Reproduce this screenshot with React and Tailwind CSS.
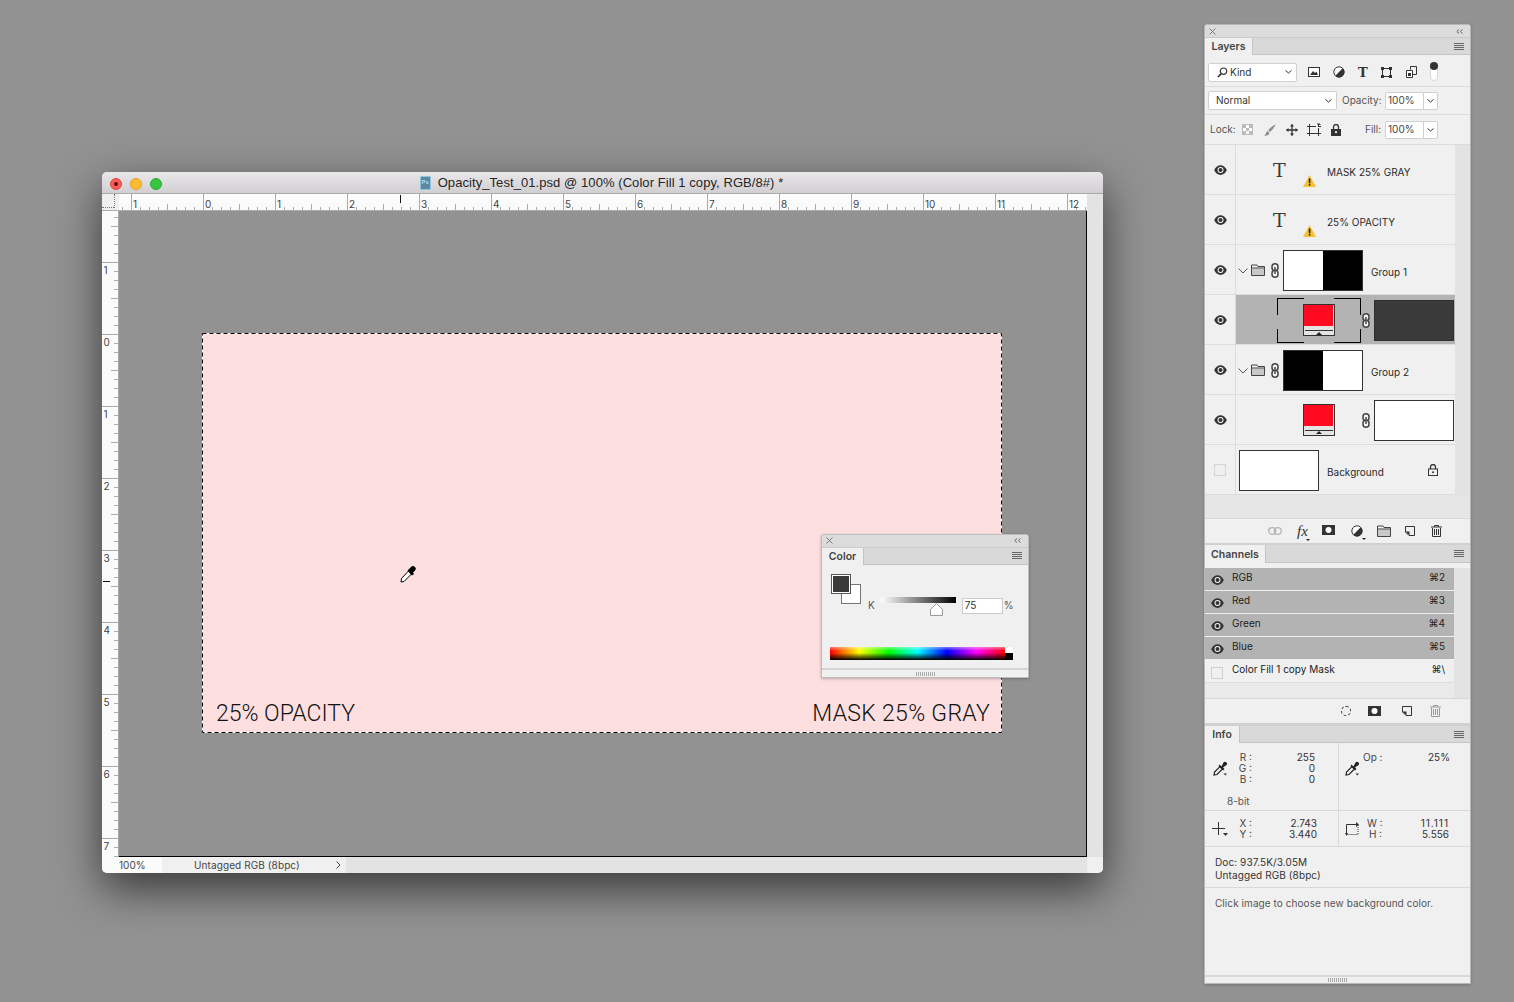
import React from "react";

const Eye = () => (
  <svg width="13" height="10" viewBox="0 0 13 10" className="block">
    <path d="M.2 5C3-1.500 10-1.500 12.800 5 10 11.500 3 11.500.2 5Z" fill="#333" />
    <circle cx="6.500" cy="5" r="3" fill="#f4f4f4" />
    <circle cx="6.500" cy="5" r="2" fill="#333" />
  </svg>
);
const Warn = () => (
  <svg width="13" height="12" viewBox="0 0 13 12" className="absolute left-[67px] top-[30px]">
    <path d="M6.500 0 13 12H0Z" fill="#f6c032" />
    <rect x="5.800" y="3.500" width="1.600" height="4.800" fill="#222" />
    <rect x="5.800" y="9" width="1.600" height="1.600" fill="#222" />
  </svg>
);
const Chain = () => (
  <svg width="8" height="15" viewBox="0 0 8 15" className="block shrink-0">
    <rect x="1" y=".8" width="6" height="7" rx="3" fill="#f4f4f4" stroke="#444" strokeWidth="1.500" />
    <rect x="1" y="7.200" width="6" height="7" rx="3" fill="#f4f4f4" stroke="#444" strokeWidth="1.500" />
    <rect x="3.200" y="4" width="1.600" height="7" fill="#555" />
  </svg>
);
const Folder = () => (
  <svg width="14" height="12" viewBox="0 0 14 12" className="block shrink-0">
    <path d="M.5 1h5.500l1 1.500h6.500v9H.5Z" fill="#f0f0f0" stroke="#444" />
    <rect x="1" y="4.500" width="12" height="6.500" fill="#c8c8c8" />
    <path d="M.5 4h13" stroke="#444" />
  </svg>
);
const Chevron = () => (
  <svg width="10" height="6" viewBox="0 0 10 6" className="block shrink-0">
    <path d="M.5.500 5 5 9.500.500" fill="none" stroke="#555" />
  </svg>
);
const SmallChevron = () => (
  <svg width="7" height="4" viewBox="0 0 7 4" className="block shrink-0">
    <path d="M.5.500 3.500 3 6.500.500" fill="none" stroke="#333" />
  </svg>
);
const Menu = () => (
  <svg width="10" height="7" viewBox="0 0 10 7" className="block">
    <path d="M0 .5h10M0 2.500h10M0 4.500h10M0 6.500h10" stroke="#666" />
  </svg>
);
const Adj = ({ s = 12 }) => (
  <svg width={s} height={s} viewBox="0 0 12 12" className="block shrink-0">
    <circle cx="6" cy="6" r="5.200" fill="#fff" stroke="#333" />
    <path d="M9.700 2.300A5.200 5.200 0 0 1 2.300 9.700Z" fill="#333" />
  </svg>
);
const Caret = () => (
  <div className="absolute -bottom-[3px] -right-[3px] h-0 w-0 border-x-[2px] border-t-[2px] border-x-transparent border-t-[#222]" />
);
const MaskIcon = ({ w = 13, h = 10 }) => (
  <svg width={w} height={h} viewBox="0 0 13 10" className="block shrink-0">
    <rect width="13" height="10" fill="#333" />
    <circle cx="6.500" cy="5" r="3" fill="#fff" />
  </svg>
);
const NewIcon = ({ c = "#333" }) => (
  <svg width="10" height="10" viewBox="0 0 10 10" className="block shrink-0">
    <path d="M.5.500h9v9H4L.5 6Z" fill="#f0f0f0" stroke={c} />
    <path d="M.5 5.500H4.500v4Z" fill={c} />
  </svg>
);
const Trash = ({ c = "#333" }) => (
  <svg width="11" height="12" viewBox="0 0 11 12" className="block shrink-0">
    <path d="M0 2h11M3.500 2V.5h4V2" fill="none" stroke={c} />
    <path d="M1.500 3v8.500h8V3" fill="none" stroke={c} />
    <path d="M3.500 4v6M5.500 4v6M7.500 4v6" stroke={c} />
  </svg>
);
const LockIcon = () => (
  <svg width="10" height="12" viewBox="0 0 10 12" className="block shrink-0">
    <path d="M2.500 5V3a2.500 2.500 0 0 1 5 0v2" fill="none" stroke="#333" strokeWidth="1.300" />
    <rect x=".5" y="5" width="9" height="6.500" fill="#f0f0f0" stroke="#333" />
    <circle cx="5" cy="8.200" r="1" fill="#333" />
  </svg>
);
const LockFill = () => (
  <svg width="10" height="12" viewBox="0 0 10 12" className="block shrink-0">
    <path d="M2.500 5V3a2.500 2.500 0 0 1 5 0v2" fill="none" stroke="#333" strokeWidth="1.300" />
    <rect y="5" width="10" height="7" fill="#333" />
    <circle cx="5" cy="8.200" r="1.100" fill="#f0f0f0" />
  </svg>
);
const Dropper = () => (
  <svg width="15" height="15" viewBox="0 0 15 15" className="block shrink-0">
    <path d="M1 14l.5-3L7 5.500 9.500 8 4 13.500Z" fill="#f0f0f0" stroke="#222" strokeWidth="1.200" />
    <path d="M6.500 3.500 8.500 5.500 10.500 1.500a1.800 1.800 0 0 1 3 2.500L10 6.500 11.500 8 10 9.500 5.500 5Z" fill="#222" />
    <path d="M10.500 12.500h3.500l-1.700 2Z" fill="#333" />
  </svg>
);
const X = ({ c = "#777" }) => (
  <svg width="7" height="7" viewBox="0 0 7 7" className="block">
    <path d="M.5.500l6 6M6.500.500l-6 6" stroke={c} />
  </svg>
);
const Collapse = () => (
  <svg width="7" height="5" viewBox="0 0 7 5" className="block">
    <path d="M3 .5.800 2.500 3 4.500M6.500.500 4.300 2.500 6.500 4.500" fill="none" stroke="#666" />
  </svg>
);
const Grip = () => (
  <svg width="19" height="4" viewBox="0 0 19 4" className="block">
    <path d="M.5 0v4M2.500 0v4M4.500 0v4M6.500 0v4M8.500 0v4M10.500 0v4M12.500 0v4M14.500 0v4M16.500 0v4M18.500 0v4" stroke="#aaa" />
  </svg>
);

const FillThumb = () => (
  <div className="flex h-[32px] w-[32px] shrink-0 flex-col border border-[#333] bg-[#e4e4e4]">
    <div className="mr-[1px] h-[22px] bg-[#ff0a20]" />
    <div className="mt-[1px] h-[1px] bg-[#e4e4e4]" />
    <div className="mx-[1px] mt-[2px] h-[1px] bg-[#333]" />
    <div className="mx-auto mt-[1px] h-0 w-0 border-x-[3px] border-b-[3px] border-x-transparent border-b-[#222]" />
  </div>
);

const LayerThumb = ({ left, right }) => (
  <div className="flex h-[41px] w-[80px] shrink-0 border border-[#333]">
    <div className={`flex-1 ${left}`} />
    <div className={`flex-1 ${right}`} />
  </div>
);

const Row = ({ visible = true, selected = false, children }) => (
  <div className="flex h-[50px] border-b border-[#dddddd]">
    <div className="flex w-[31px] shrink-0 items-center justify-center border-r border-[#dddddd]">
      {visible ? <Eye /> : <div className="h-[12px] w-[12px] border border-[#d4d4d4]" />}
    </div>
    <div className={`relative flex flex-1 items-center ${selected ? "bg-[#b3b3b3]" : ""}`}>{children}</div>
  </div>
);

const Label = ({ children, className = "" }) => (
  <span className={`mt-[4px] text-[10px] leading-[12px] whitespace-nowrap text-[#2a2a2a] ${className}`}>{children}</span>
);

const TextLayerRow = ({ name }) => (
  <Row>
    <span className="ml-[37px] w-[54px] font-['DejaVu_Serif',serif] text-[19px] leading-[20px] font-normal text-[#3a3a3a]">T</span>
    <Warn />
    <Label>{name}</Label>
  </Row>
);

const GroupRow = ({ left, right, name }) => (
  <Row>
    <div className="ml-[2px] mt-[2px]"><Chevron /></div>
    <div className="ml-[3px] mt-[1px]"><Folder /></div>
    <div className="ml-[6px] mt-[1px]"><Chain /></div>
    <div className="ml-[4px] mt-[2px]"><LayerThumb left={left} right={right} /></div>
    <Label className="ml-[8px]">{name}</Label>
  </Row>
);

const Tabs = ({ title, w, tall = false, low = false }) => (
  <div className={`flex ${tall ? "h-[18px]" : "h-[17px]"} items-stretch border-b border-[#c4c4c4] bg-[#d9d9d9]`}>
    <div className={`${w} ${low ? "pt-[2px]" : ""} -mb-[1px] flex items-center justify-center border-r border-[#c4c4c4] bg-[#f0f0f0] text-[10.500px] font-semibold text-[#444]`}>{title}</div>
    <div className="ml-auto mr-[6px] flex items-center"><Menu /></div>
  </div>
);

const PanelTop = () => (
  <div className="flex h-[13px] items-center justify-between rounded-t-[3px] border-b border-[#c9c9c9] bg-[#dcdcdc] pl-[4px] pr-[7px]">
    <X />
    <Collapse />
  </div>
);

const Select = ({ w, label, children }) => (
  <div className={`${w} flex h-[19px] shrink-0 items-center rounded-[2px] border border-[#d0d0d0] bg-white pr-[4px] text-[10px] text-[#333]`}>
    {children}
    <span className="flex-1">{label}</span>
    <SmallChevron />
  </div>
);

const Percent = () => (
  <div className="flex h-[18px] w-[53px] shrink-0 rounded-[2px] border border-[#d0d0d0] bg-white text-[10px] text-[#444]">
    <span className="flex w-[37px] items-center pl-[2px]">100%</span>
    <span className="flex flex-1 items-center justify-center border-l border-[#d0d0d0]"><SmallChevron /></span>
  </div>
);

const LayersPanel = () => (
  <>
    <Tabs title="Layers" w="w-[48px]" />
    <div className="flex h-[32px] items-center border-b border-[#dcdcdc] pl-[3px] pt-[3px]">
      <Select w="w-[89px]" label="Kind">
        <svg width="11" height="11" viewBox="0 0 11 11" className="ml-[8px] mr-[2px] block shrink-0">
          <circle cx="6.500" cy="4.200" r="3.200" fill="none" stroke="#333" strokeWidth="1.200" />
          <path d="M4 6.800 1 10" stroke="#333" strokeWidth="1.700" />
        </svg>
      </Select>
      <svg width="12" height="10" viewBox="0 0 12 10" className="ml-[11px] block shrink-0">
        <rect x=".5" y=".5" width="11" height="9" fill="#fff" stroke="#333" />
        <path d="M2 8l3-4 2 2 1.500-1.500L10 8Z" fill="#333" />
      </svg>
      <div className="ml-[13px]"><Adj /></div>
      <span className="ml-[13px] w-[12px] font-['DejaVu_Serif',serif] text-[13px] leading-[13px] font-bold text-[#333]">T</span>
      <svg width="11" height="11" viewBox="0 0 11 11" className="ml-[11px] block shrink-0">
        <rect x="1.500" y="1.500" width="8" height="8" fill="none" stroke="#333" />
        <path d="M0 0h3v3H0ZM8 0h3v3H8ZM0 8h3v3H0ZM8 8h3v3H8Z" fill="#333" />
      </svg>
      <svg width="11" height="12" viewBox="0 0 11 12" className="ml-[14px] block shrink-0">
        <path d="M4.500 3.500V.5h6v8h-4" fill="#f0f0f0" stroke="#333" />
        <path d="M.5 4.500h6v7h-6Z" fill="#fff" stroke="#333" />
        <rect x="2" y="7" width="3" height="3" fill="#333" />
      </svg>
      <div className="relative ml-[13px] -mt-[1px] h-[19px] w-[8px] rounded-full border border-[#d8d8d8] bg-white">
        <div className="absolute -left-[1px] -top-[1px] h-[8px] w-[8px] rounded-full bg-[#333]" />
      </div>
    </div>
    <div className="flex h-[28px] items-center border-b border-[#dcdcdc] pl-[3px]">
      <Select w="w-[129px]" label="Normal"><span className="w-[7px]" /></Select>
      <span className="ml-[5px] w-[43px] text-[10px] text-[#555]">Opacity:</span>
      <Percent />
    </div>
    <div className="flex h-[30px] items-center border-b border-[#dcdcdc] pl-[5px]">
      <span className="w-[32px] text-[10px] text-[#555]">Lock:</span>
      <div className="mr-[11px] grid h-[11px] w-[11px] shrink-0 grid-cols-3 border border-[#bbb]">
        <div className="bg-[#bbb]" /><div className="bg-white" /><div className="bg-[#bbb]" />
        <div className="bg-white" /><div className="bg-[#bbb]" /><div className="bg-white" />
        <div className="bg-[#bbb]" /><div className="bg-white" /><div className="bg-[#bbb]" />
      </div>
      <svg width="12" height="12" viewBox="0 0 12 12" className="mr-[10px] block shrink-0">
        <path d="M11.800.3C8.500 1.800 6 4 4.200 6.300L6 8C8 6.300 10.500 3.500 11.800.3ZM3.500 7C2 7.500 2.500 10 .2 11.700 3.500 12 6 10.500 5.300 8.700Z" fill="#909090" />
      </svg>
      <svg width="12" height="12" viewBox="0 0 12 12" className="mr-[9px] block shrink-0">
        <path d="M6 .5v11M.5 6h11" stroke="#333" strokeWidth="1.300" />
        <path d="M6 0l2 2.500H4ZM6 12l2-2.500H4ZM0 6l2.500-2v4ZM12 6 9.500 4v4Z" fill="#333" />
      </svg>
      <svg width="14" height="13" viewBox="0 0 14 13" className="mr-[10px] block shrink-0">
        <path d="M0 3.500h9M11 3.500h3M0 10.500h14M2.500 1v12M11.500 1v2M11.500 5v8" fill="none" stroke="#333" />
        <path d="M10 1l3 0v1" fill="none" stroke="#333" />
      </svg>
      <LockFill />
      <span className="ml-[24px] w-[20px] text-[10px] text-[#555]">Fill:</span>
      <Percent />
    </div>
    <div className="flex">
      <div className="w-[250px] shrink-0">
        <TextLayerRow name="MASK 25% GRAY" />
        <TextLayerRow name="25% OPACITY" />
        <GroupRow left="bg-white" right="bg-black" name="Group 1" />
        <Row selected>
          <div className="relative ml-[41px] mt-[2px] flex h-[45px] w-[84px] shrink-0 items-center justify-center pb-[1px]">
            <div className="absolute left-0 top-0 h-[17px] w-[27px] border-l border-t border-black" />
            <div className="absolute right-0 top-0 h-[17px] w-[27px] border-r border-t border-black" />
            <div className="absolute bottom-0 left-0 h-[14px] w-[27px] border-b border-l border-black" />
            <div className="absolute bottom-0 right-0 h-[14px] w-[27px] border-b border-r border-black" />
            <FillThumb />
          </div>
          <div className="ml-[1px] mt-[1px]"><Chain /></div>
          <div className="ml-[4px] mt-[2px] h-[41px] w-[80px] shrink-0 border border-[#2e2e2e] bg-[#3a3a3a]" />
        </Row>
        <GroupRow left="bg-black" right="bg-white" name="Group 2" />
        <Row>
          <div className="ml-[67px]"><FillThumb /></div>
          <div className="ml-[27px] mt-[1px]"><Chain /></div>
          <div className="ml-[4px] mt-[2px] h-[41px] w-[80px] shrink-0 border border-[#333] bg-white" />
        </Row>
        <Row visible={false}>
          <div className="ml-[3px] mt-[2px] h-[41px] w-[80px] shrink-0 border border-[#333] bg-white" />
          <Label className="ml-[8px] w-[101px]">Background</Label>
          <LockIcon />
        </Row>
      </div>
      <div className="flex-1 bg-[#e3e3e3]" />
    </div>
    <div className="h-[23px] bg-[#e6e6e6]" />
    <div className="flex h-[25px] items-center border-t border-[#d8d8d8] pl-[63px]">
      <svg width="14" height="8" viewBox="0 0 14 8" className="block shrink-0">
        <rect x=".7" y=".7" width="7" height="6.600" rx="3.300" fill="none" stroke="#b5b5b5" strokeWidth="1.300" />
        <rect x="6.300" y=".7" width="7" height="6.600" rx="3.300" fill="none" stroke="#b5b5b5" strokeWidth="1.300" />
      </svg>
      <span className="relative ml-[15px] w-[10px] font-['Liberation_Serif',serif] text-[15px] leading-[14px] text-[#333] italic">fx<Caret /></span>
      <div className="ml-[15px] -mt-[2px]"><MaskIcon /></div>
      <div className="relative ml-[16px]"><Adj /><Caret /></div>
      <div className="ml-[14px]"><Folder /></div>
      <div className="ml-[14px]"><NewIcon /></div>
      <div className="ml-[16px]"><Trash /></div>
    </div>
  </>
);

const Channel = ({ name, keys, on = true }) => (
  <div className={`flex h-[23px] items-center border-b ${on ? "border-[#f0f0f0] bg-[#b3b3b3]" : "border-[#dddddd] bg-[#f0f0f0]"} pl-[6px] pr-[9px] text-[10px] text-[#222]`}>
    <div className="mt-[1px] w-[13px] shrink-0">
      {on ? <Eye /> : <div className="mt-[2px] h-[12px] w-[12px] border border-[#d0d0d0]" />}
    </div>
    <span className="-mt-[3px] ml-[8px] flex-1">{name}</span>
    <span className="-mt-[3px]">{keys}</span>
  </div>
);

const ChannelsPanel = () => (
  <>
    <div className="h-[2px] bg-[#d0d0d0]" />
    <Tabs title="Channels" w="w-[61px]" tall low />
    <div className="h-[5px]" />
    <div className="flex">
      <div className="w-[249px] shrink-0">
        <Channel name="RGB" keys="⌘2" />
        <Channel name="Red" keys="⌘3" />
        <Channel name="Green" keys="⌘4" />
        <Channel name="Blue" keys="⌘5" />
        <Channel name="Color Fill 1 copy Mask" keys="⌘\" on={false} />
        <div className="h-[15px] bg-[#eaeaea]" />
      </div>
      <div className="flex-1 bg-[#e3e3e3]" />
    </div>
    <div className="flex h-[25px] items-center border-t border-[#d8d8d8] pl-[136px]">
      <div className="h-[10px] w-[10px] rounded-full border border-dashed border-[#333]" />
      <div className="ml-[17px]"><MaskIcon /></div>
      <div className="ml-[21px]"><NewIcon /></div>
      <div className="ml-[18px]"><Trash c="#999" /></div>
    </div>
  </>
);

const InfoLines = ({ labels, values, labelW, valueW }) => (
  <div className="flex text-[10px] leading-[11px] text-[#444]">
    <div className={`${labelW} text-right whitespace-pre`}>
      {labels.map((l) => <div key={l}>{l}</div>)}
    </div>
    <div className={`${valueW} text-right text-[#333]`}>
      {values.map((v, i) => <div key={i}>{v}</div>)}
    </div>
  </div>
);

const InfoPanel = () => (
  <>
    <div className="h-[3px] bg-[#d0d0d0]" />
    <Tabs title="Info" w="w-[35px]" />
    <div className="flex h-[68px] border-b border-[#d8d8d8]">
      <div className="flex w-[134px] shrink-0 flex-col border-r border-[#d8d8d8] pt-[9px]">
        <div className="flex">
          <div className="ml-[8px] mt-[9px]"><Dropper /></div>
          <div className="ml-[9px]">
            <InfoLines labels={["R :", "G :", "B :"]} values={["255", "0", "0"]} labelW="w-[15px]" valueW="w-[63px]" />
          </div>
        </div>
        <span className="ml-[22px] mt-[11px] text-[10px] leading-[11px] text-[#555]">8-bit</span>
      </div>
      <div className="flex flex-1 pt-[9px]">
        <div className="ml-[6px] mt-[9px]"><Dropper /></div>
        <div className="ml-[3px]">
          <InfoLines labels={["Op :"]} values={["25%"]} labelW="w-[19px]" valueW="w-[68px]" />
        </div>
      </div>
    </div>
    <div className="flex h-[36px] border-b border-[#d8d8d8]">
      <div className="flex w-[134px] shrink-0 items-center border-r border-[#d8d8d8]">
        <svg width="16" height="15" viewBox="0 0 16 15" className="ml-[7px] mt-[1px] block shrink-0">
          <path d="M6.500 0v13M0 6.500h13" stroke="#333" />
          <path d="M11 11h5l-2.500 3Z" fill="#333" />
        </svg>
        <div className="ml-[9px]">
          <InfoLines labels={["X :", "Y :"]} values={["2.743", "3.440"]} labelW="w-[15px]" valueW="w-[65px]" />
        </div>
      </div>
      <div className="flex flex-1 items-center">
        <svg width="14" height="14" viewBox="0 0 14 14" className="ml-[6px] block shrink-0">
          <path d="M1.500 13V2.500H13" fill="none" stroke="#333" />
          <path d="M1.500 12.500H13V3" fill="none" stroke="#333" strokeDasharray="1 1" />
          <path d="M11 0l3 2.500L11 5ZM0 11l1.500 3L3 11Z" fill="#333" />
        </svg>
        <div className="ml-[8px]">
          <InfoLines labels={["W :", "H :"]} values={[<span key="w" className="tracking-[1px]">11.111</span>, "5.556"]} labelW="w-[15px]" valueW="w-[67px]" />
        </div>
      </div>
    </div>
    <div className="flex h-[41px] flex-col justify-center border-b border-[#d8d8d8] pl-[10px] pt-[3px] text-[10px] leading-[13px] tracking-[0.1px] text-[#333]">
      <span>Doc: 937.5K/3.05M</span>
      <span>Untagged RGB (8bpc)</span>
    </div>
    <div className="h-[87px] pl-[10px] pt-[9px] text-[10px] leading-[13px] tracking-[0.07px] text-[#555]">
      Click image to choose new background color.
    </div>
    <div className="flex h-[8px] items-center justify-center border-t-2 border-[#d8d8d8]"><Grip /></div>
  </>
);

const ColorPanel = () => (
  <div className="absolute left-[821px] top-[534px] flex h-[144px] w-[208px] flex-col rounded-t-[3px] border border-[#bdbdbd] bg-[#f0f0f0] font-['Inter',sans-serif] shadow-[0_1px_3px_rgba(0,0,0,0.25)]">
    <PanelTop />
    <Tabs title="Color" w="w-[42px]" low />
    <div className="flex h-[105px] flex-col">
      <div className="flex">
        <div className="relative ml-[9px] mt-[9px] h-[30px] w-[30px] shrink-0">
          <div className="absolute bottom-0 right-0 h-[20px] w-[20px] border border-[#777] bg-white" />
          <div className="absolute left-0 top-0 h-[20px] w-[20px] border border-[#555] bg-[#3a3a3a] outline outline-1 -outline-offset-2 outline-white" />
        </div>
        <span className="ml-[7px] mt-[34px] text-[10px] leading-[12px] text-[#555]">K</span>
        <div className="relative ml-[6px] mt-[32px] h-[6px] w-[75px] bg-[linear-gradient(to_right,#fff,#000)]">
          <svg width="13" height="13" viewBox="0 0 13 13" className="absolute left-[49px] top-[6px] block">
            <path d="M6.500.5 12.500 6.500V12.500H.5V6.500Z" fill="#fff" stroke="#999" />
          </svg>
        </div>
        <div className="ml-[6px] mt-[33px] flex h-[16px] w-[41px] items-center border border-[#ccc] bg-white pb-[1px] pl-[2px] text-[10px] text-[#333]">75</div>
        <span className="ml-[1px] mt-[34px] text-[10px] leading-[12px] text-[#555]">%</span>
      </div>
      <div className="ml-[8px] mt-[33px] flex h-[13px]">
        <div className="relative w-[175px] bg-[linear-gradient(to_right,#f00,#ff0,#0f0,#0ff,#00f,#f0f,#f00)]">
          <div className="absolute inset-0 bg-[linear-gradient(to_bottom,rgba(255,255,255,0.45)_0%,transparent_30%,transparent_45%,#000_100%)]" />
        </div>
        <div className="flex w-[8px] flex-col">
          <div className="flex-1 bg-white" />
          <div className="flex-1 bg-black" />
        </div>
      </div>
    </div>
    <div className="flex h-[9px] items-center justify-center border-t-2 border-[#d4d4d4]"><Grip /></div>
  </div>
);

const topLabels = ["1", "0", "1", "2", "3", "4", "5", "6", "7", "8", "9", "10", "11", "12"];
const sideLabels = ["1", "0", "1", "2", "3", "4", "5", "6", "7"];

const TopRuler = () => {
  const ticks = [];
  for (let i = 0; i < 112; i++) {
    const x = 3 + i * 9;
    if (i % 8 === 1) continue;
    ticks.push(<path key={i} d={`M${x + 0.5} ${i % 4 === 1 ? 10 : 13}V16`} stroke="#aaa" />);
  }
  return (
    <svg width="968" height="16" viewBox="0 0 968 16" className="block">
      {ticks}
      {topLabels.map((t, i) => (
        <g key={i}>
          <path d={`M${12.5 + i * 72} 0V16`} stroke="#aaa" />
          <text x={14 + i * 72} y="14" fontSize="10" fill="#444">{t}</text>
        </g>
      ))}
      <path d="M281.500 1V9" stroke="#111" />
    </svg>
  );
};

const SideRuler = () => {
  const ticks = [];
  for (let i = 0; i < 72; i++) {
    const y = 6 + i * 9;
    if (i % 8 === 5) continue;
    ticks.push(<path key={i} d={`M${i % 4 === 1 ? 9 : 12} ${y + 0.5}H16`} stroke="#aaa" />);
  }
  return (
    <svg width="16" height="646" viewBox="0 0 16 646" className="block">
      {ticks}
      {sideLabels.map((t, i) => (
        <g key={i}>
          <path d={`M0 ${51.5 + i * 72}H16`} stroke="#aaa" />
          <text x="1.500" y={63 + i * 72} fontSize="10" fill="#444">{t}</text>
        </g>
      ))}
      <path d="M1 370.500H8" stroke="#111" />
    </svg>
  );
};

export default function App() {
  return (
    <div className="relative h-[1002px] w-[1514px] overflow-hidden bg-[#929292] font-['Inter',sans-serif]">
      <div className="absolute left-[102px] top-[172px] flex h-[701px] w-[1001px] flex-col rounded-[5px] bg-[#e3e3e3] shadow-[0_16px_44px_rgba(0,0,0,0.62)]">
        <div className="relative flex h-[22px] shrink-0 items-center justify-center rounded-t-[5px] border-b border-[#aaa] bg-[linear-gradient(to_bottom,#e9e7e9,#d1cfd1)]">
          <div className="absolute left-[8px] top-[6px] flex gap-[8px]">
            <div className="flex h-[12px] w-[12px] items-center justify-center rounded-full border border-[#e0443e] bg-[#fc5b57]">
              <div className="h-[4px] w-[4px] rounded-full bg-[#5c0a08]" />
            </div>
            <div className="h-[12px] w-[12px] rounded-full border border-[#dea123] bg-[#fdbc2f]" />
            <div className="h-[12px] w-[12px] rounded-full border border-[#2aa834] bg-[#36c63f]" />
          </div>
          <div className="mr-[2px] flex items-center">
            <div className="mr-[7px] flex h-[14px] w-[11px] items-center justify-center rounded-[1px] border border-[#8cc6e4] bg-[#5f87a0] font-['Liberation_Sans',sans-serif] text-[6px] font-bold text-[#a8dcf5]">Ps</div>
            <span className="font-['Liberation_Sans',sans-serif] text-[13px] leading-[16px] tracking-[0.07px] whitespace-nowrap text-[#262626]">Opacity_Test_01.psd @ 100% (Color Fill 1 copy, RGB/8#) *</span>
          </div>
        </div>
        <div className="flex h-[17px] shrink-0">
          <div className="relative w-[17px] shrink-0 border-b border-[#aaa] bg-[#efefef]">
            <div className="absolute bottom-[2px] left-0 h-[1px] w-[12px] border-b border-dotted border-[#777]" />
            <div className="absolute left-[12px] top-0 h-[14px] w-[1px] border-l border-dotted border-[#777]" />
          </div>
          <div className="w-[968px] shrink-0 border-b border-[#aaa] bg-[#fbfbfb]"><TopRuler /></div>
        </div>
        <div className="flex h-[646px] shrink-0">
          <div className="w-[17px] shrink-0 border-r border-[#aaa] bg-[#fbfbfb]"><SideRuler /></div>
          <div className="h-[646px] w-[968px] shrink-0 border-b border-r border-black bg-[#929292] pl-[83px] pt-[122px]">
            <div className="relative flex h-[400px] w-[800px] items-end justify-between bg-[#fddfe0] pb-[3px] pl-[14px] pr-[12px] font-['Roboto',sans-serif] text-[23px] leading-[32px] font-light text-[#111]">
              <svg width="800" height="400" viewBox="0 0 800 400" className="absolute left-0 top-0 block">
                <rect x=".5" y=".5" width="799" height="399" fill="none" stroke="#fff" />
                <rect x=".5" y=".5" width="799" height="399" fill="none" stroke="#000" strokeDasharray="4 3" />
              </svg>
              <span>25% OPACITY</span>
              <span className="tracking-[0.3px]">MASK 25% GRAY</span>
            </div>
          </div>
        </div>
        <div className="flex flex-1 text-[10px] text-[#444]">
          <div className="flex w-[60px] items-center rounded-bl-[5px] bg-[#fbfbfb] pl-[17px]">100%</div>
          <div className="flex w-[184px] items-center bg-[#f0f0f0] pl-[32px] tracking-[0.1px]">
            <span className="flex-1">Untagged RGB (8bpc)</span>
            <svg width="5" height="8" viewBox="0 0 5 8" className="mr-[5px] block">
              <path d="M.5.500 4 4 .5 7.500" fill="none" stroke="#444" />
            </svg>
          </div>
          <div className="flex-1 bg-[#e3e3e3]" />
          <div className="w-[16px] rounded-br-[5px] bg-[#f0f0f0]" />
        </div>
      </div>

      <svg width="17" height="18" viewBox="0 0 17 18" className="absolute left-[400px] top-[565px] block">
        <path d="M1 17l.5-3.500L8.500 6 11.500 9 4 16.500Z" fill="#fff" stroke="#000" />
        <path d="M7.500 5.500 9 4 11 2a2.500 2.500 0 0 1 4 3.500L13 7.500 14 9 12 10.500Z" fill="#000" />
      </svg>

      <ColorPanel />

      <div className="absolute left-[1204px] top-[24px] h-[960px] w-[267px] rounded-t-[3px] border border-[#b8b8b8] bg-[#f0f0f0] shadow-[0_1px_3px_rgba(0,0,0,0.2)]">
        <PanelTop />
        <LayersPanel />
        <ChannelsPanel />
        <InfoPanel />
      </div>
    </div>
  );
}
